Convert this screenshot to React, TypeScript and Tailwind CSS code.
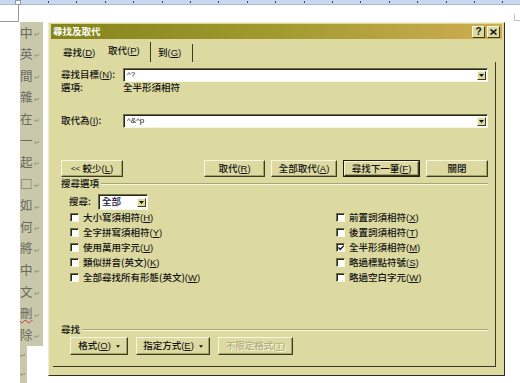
import React from "react";

const DOC_CHARS = ["中", "英", "間", "雜", "在", "一", "起", "□", "如", "何", "將", "中", "文", "刪", "除"];

/** Access-key suffix like (D) with the letter underlined. */
function Acc({ k }: { k: string }) {
  return (
    <span className="font-['Liberation_Sans',sans-serif]">
      (<span className="underline underline-offset-1">{k}</span>)
    </span>
  );
}

function Ruler() {
  const ticks = Array.from({ length: 17 }, (_, i) => 48 + i * 28.4);
  return (
    <div className="relative h-[5px] w-full border-b border-b-[#a9bcd6] bg-[#c8d8ee]">
      <span className="absolute left-[15px] top-0 h-[5px] w-[6px] border border-[#8a9ab0] bg-white" />
      {ticks.map((x) => (
        <span key={x} className="absolute top-[1px] h-[2px] w-px bg-[#3c4860]" style={{ left: x }} />
      ))}
    </div>
  );
}

function DocColumn() {
  return (
    <div className="flex w-[23px] flex-col">
      <div className="w-[23px] bg-[#c9c8ab]">
        {DOC_CHARS.map((c, i) => (
          <div key={i} className="flex h-[21.6px] items-center text-[12.5px] leading-none text-[#6a6a60]">
            <span className={c === "刪" ? "underline decoration-wavy decoration-[#d03030] decoration-1 underline-offset-1" : ""}>{c}</span>
            <span className="ml-px mt-[3px] text-[7px] text-[#8a8a80]">↵</span>
          </div>
        ))}
      </div>
      <div className="w-[7px] bg-[#c9c8ab]">
        <div className="flex h-[20px] items-center text-[7px] leading-none text-[#8a8a80]">↵</div>
        <div className="flex h-[17px] items-center text-[7px] leading-none text-[#8a8a80]">↵</div>
      </div>
    </div>
  );
}

function Tri({ w = 5, h = 3 }: { w?: number; h?: number }) {
  return (
    <svg width={w} height={h} viewBox="0 0 5 3">
      <path d="M0 0h5L2.5 3z" fill="#111" />
    </svg>
  );
}

function DropArrow() {
  return (
    <div className="flex h-[9px] w-[9px] items-center justify-center border border-t-[#f7f6df] border-l-[#f7f6df] border-r-[#3d3c22] border-b-[#3d3c22] bg-[#dcdaa1]">
      <Tri />
    </div>
  );
}

function Combo({ value }: { value: string }) {
  return (
    <div className="flex h-[14px] flex-1 items-center border border-t-[#6f6d45] border-l-[#6f6d45] border-r-[#f7f6df] border-b-[#f7f6df] bg-white pl-[3px] pr-[1px] shadow-[inset_1px_1px_0_#26261a]">
      <span className="flex-1 font-['Liberation_Sans',sans-serif] text-[8px] leading-none">{value}</span>
      <DropArrow />
    </div>
  );
}

function Btn({
  children,
  w,
  primary = false,
  disabled = false,
}: {
  children: React.ReactNode;
  w: string;
  primary?: boolean;
  disabled?: boolean;
}) {
  const face = (
    <div
      className={`flex h-full w-full items-center justify-center border border-t-[#f7f6df] border-l-[#f7f6df] border-r-[#3d3c22] border-b-[#3d3c22] bg-[#dcdaa1] shadow-[inset_-1px_-1px_0_#a3a170] ${
        disabled ? "text-[#aeac80] [text-shadow:1px_1px_0_#f7f6df]" : "text-[#111]"
      }`}
    >
      {children}
    </div>
  );
  return (
    <div className={`h-full shrink-0 ${w} ${primary ? "border border-[#1e1e12]" : ""}`}>{face}</div>
  );
}

function Check({ label, checked = false }: { label: React.ReactNode; checked?: boolean }) {
  return (
    <div className="flex h-[15px] items-center gap-[4px]">
      <div className="relative h-[9px] w-[9px] border border-t-[#6f6d45] border-l-[#6f6d45] border-r-[#f7f6df] border-b-[#f7f6df] bg-white shadow-[inset_1px_1px_0_#26261a]">
        {checked && (
          <svg className="absolute left-0 top-0" width="8" height="8" viewBox="0 0 8 8">
            <path d="M1.5 3.5l1.8 2L6.8 1.6" stroke="#111" strokeWidth="1.4" fill="none" />
          </svg>
        )}
      </div>
      <span>{label}</span>
    </div>
  );
}

function GroupLabel({ title }: { title: string }) {
  return (
    <div className="flex h-[14px] items-center">
      <span>{title}</span>
      <div className="ml-[2px] h-[2px] flex-1 border-t border-t-[#a8a676] border-b border-b-[#f7f6df]" />
    </div>
  );
}

function Dialog() {
  return (
    <div className="ml-[5px] flex h-[354px] w-[457px] flex-col border border-t-[#f0efd2] border-l-[#f0efd2] border-r-[#2e2e1a] border-b-[#2e2e1a] bg-[#dcdaa1] px-[2px] pt-[1px] text-[9.5px] font-medium leading-none text-[#111]">
      {/* title bar */}
      <div className="flex h-[15px] shrink-0 items-center bg-linear-to-r from-[#84841a] via-[#a19a30] to-[#d0ad52] pl-[2px] pr-[2px]">
        <span className="flex-1 font-bold text-white">尋找及取代</span>
        <div className="flex gap-[2px]">
          <div className="flex h-[12px] w-[13px] items-center justify-center border border-t-[#f7f6df] border-l-[#f7f6df] border-r-[#3d3c22] border-b-[#3d3c22] bg-[#dcdaa1] font-['Liberation_Sans',sans-serif] text-[10px] font-bold">
            ?
          </div>
          <div className="flex h-[12px] w-[13px] items-center justify-center border border-t-[#f7f6df] border-l-[#f7f6df] border-r-[#3d3c22] border-b-[#3d3c22] bg-[#dcdaa1]">
            <svg width="7" height="6" viewBox="0 0 7 6">
              <path d="M0.5 0.5l6 5M6.5 0.5l-6 5" stroke="#111" strokeWidth="1.6" />
            </svg>
          </div>
        </div>
      </div>

      {/* tabs */}
      <div className="flex h-[23px] shrink-0 items-end pl-[4px]">
        <div className="flex h-[18px] w-[46px] items-center pl-[8px]">
          尋找<Acc k="D" />
        </div>
        <div className="flex h-[20px] w-[50px] items-center border-r border-r-[#3d3c22] pb-[2px] pl-[7px]">
          取代<Acc k="P" />
        </div>
        <div className="flex h-[18px] w-[42px] items-center border-r border-r-[#3d3c22] pl-[7px]">
          到<Acc k="G" />
        </div>
      </div>

      {/* tab panel */}
      <div className="ml-[2px] flex h-[305px] w-[443px] shrink-0 flex-col border-r border-b border-r-[#3d3c22] border-b-[#3d3c22] pl-[8px] pr-[7px]">
        <div className="mt-[6px] flex h-[14px] items-center">
          <span className="w-[62px]">
            尋找目標<Acc k="N" />:
          </span>
          <Combo value="^?" />
        </div>
        <div className="flex h-[12px] items-center">
          <span className="w-[62px]">選項:</span>
          <span>全半形須相符</span>
        </div>
        <div className="mt-[20px] flex h-[14px] items-center">
          <span className="w-[62px]">
            取代為<Acc k="I" />:
          </span>
          <Combo value="^&^p" />
        </div>

        <div className="mt-[32px] flex h-[17px] justify-between">
          <Btn w="w-[62px]">
            <span className="font-['Liberation_Sans',sans-serif] text-[8px]">&lt;&lt;&nbsp;</span>較少<Acc k="L" />
          </Btn>
          <div className="flex h-full gap-[6px]">
            <Btn w="w-[61px]">
              取代<Acc k="R" />
            </Btn>
            <Btn w="w-[66px]">
              全部取代<Acc k="A" />
            </Btn>
            <Btn w="w-[77px]" primary>
              尋找下一筆<Acc k="F" />
            </Btn>
            <Btn w="w-[62px]">關閉</Btn>
          </div>
        </div>

        <GroupLabel title="搜尋選項" />

        <div className="mt-[3px] flex h-[16px] items-center pl-[8px]">
          <span className="w-[29px]">搜尋:</span>
          <div className="flex h-[16px] w-[50px] items-center border border-t-[#6f6d45] border-l-[#6f6d45] border-r-[#f7f6df] border-b-[#f7f6df] bg-white pl-[3px] pr-[1px] shadow-[inset_1px_1px_0_#26261a]">
            <span className="flex-1 text-[#101040]">全部</span>
            <DropArrow />
          </div>
        </div>

        <div className="flex pl-[9px]">
          <div className="flex w-[266px] flex-col">
            <Check label={<>大小寫須相符<Acc k="H" /></>} />
            <Check label={<>全字拼寫須相符<Acc k="Y" /></>} />
            <Check label={<>使用萬用字元<Acc k="U" /></>} />
            <Check label={<>類似拼音(英文)<Acc k="K" /></>} />
            <Check label={<>全部尋找所有形態(英文)<Acc k="W" /></>} />
          </div>
          <div className="flex flex-col">
            <Check label={<>前置詞須相符<Acc k="X" /></>} />
            <Check label={<>後置詞須相符<Acc k="T" /></>} />
            <Check label={<>全半形須相符<Acc k="M" /></>} checked />
            <Check label={<>略過標點符號<Acc k="S" /></>} />
            <Check label={<>略過空白字元<Acc k="W" /></>} />
          </div>
        </div>

        <div className="mt-[38px]">
          <GroupLabel title="尋找" />
        </div>

        <div className="flex h-[18px] gap-[8px] pl-[9px]">
          <Btn w="w-[58px]">
            格式<Acc k="O" />
            <span className="ml-[5px] flex items-center">
              <Tri w={4} h={3} />
            </span>
          </Btn>
          <Btn w="w-[74px]">
            指定方式<Acc k="E" />
            <span className="ml-[5px] flex items-center">
              <Tri w={4} h={3} />
            </span>
          </Btn>
          <Btn w="w-[75px]" disabled>
            不限定格式<Acc k="T" />
          </Btn>
        </div>
      </div>
    </div>
  );
}

export default function App() {
  return (
    <div className="relative h-[383px] w-[520px] overflow-hidden bg-white font-['Noto_Sans_CJK_TC',sans-serif]">
      <Ruler />
      <div className="relative h-[17px]">
        {/* page corner marks */}
        <span className="absolute left-0 top-[16px] h-px w-[18px] bg-[#9c9c9c]" />
        <span className="absolute left-[18px] top-0 h-[17px] w-px bg-[#9c9c9c]" />
        <span className="absolute left-[514px] top-[9px] h-[7px] w-px bg-[#c4c4c4]" />
        <span className="absolute left-[514px] top-[15px] h-px w-[6px] bg-[#c4c4c4]" />
      </div>
      <div className="flex items-start pl-[20px]">
        <DocColumn />
        <Dialog />
      </div>
    </div>
  );
}
